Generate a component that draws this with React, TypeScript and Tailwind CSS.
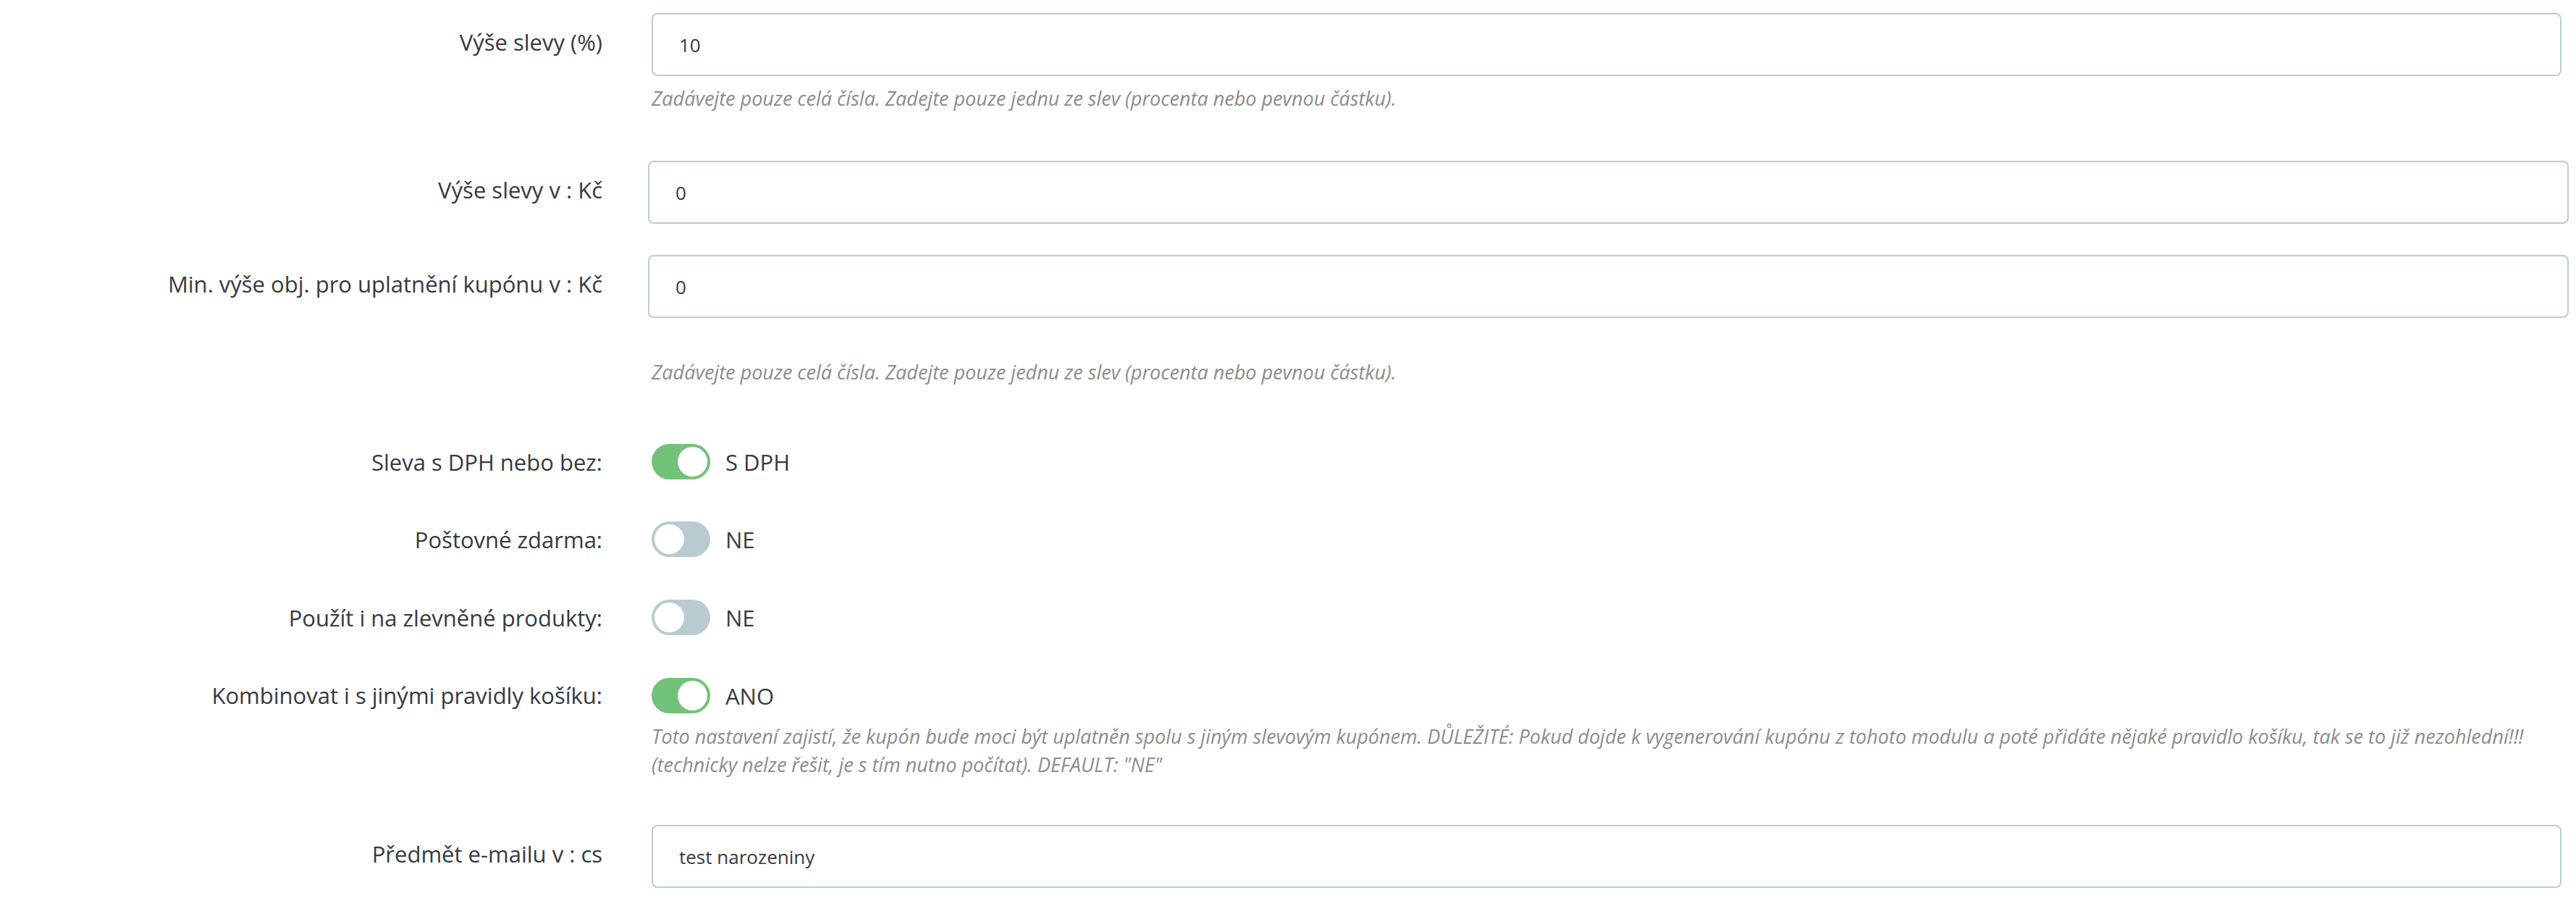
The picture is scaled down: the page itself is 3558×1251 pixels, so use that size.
import React from "react";

const font = { fontFamily: '"Open Sans", "Noto Sans", sans-serif' };

const Label = ({ children, toggle }: { children: React.ReactNode; toggle?: boolean }) => (
    <div className={"w-[832px] shrink-0 text-right text-[31px] leading-[46px] text-[#363a41] " + (toggle ? "" : "pt-[17px]")}>
        {children}
    </div>
);

const Help = ({ children, className = "" }: { children: React.ReactNode; className?: string }) => (
    <p className={"text-[27px] leading-[39px] italic text-[#8c8c8c] " + className}>{children}</p>
);

const TextInput = ({ value }: { value: string }) => (
    <input
        readOnly
        value={value}
        className="block w-full h-[87px] rounded-[8px] border-2 border-[#bbcdd2] bg-white pl-[36px] text-[26px] text-[#363a41] outline-none"
        style={font}
    />
);

const Toggle = ({ on, text }: { on: boolean; text: string }) => (
    <div className="flex items-center">
        <span
            className={
                "flex h-[49px] w-[81px] items-center rounded-full px-[4px] " +
                (on ? "bg-[#72c279] justify-end" : "bg-[#b9cbd0] justify-start")
            }
        >
            <span className="block h-[41px] w-[41px] rounded-full bg-white"></span>
        </span>
        <span className="ml-[21px] text-[31px] leading-[46px] text-[#363a41]">{text}</span>
    </div>
);

export default function App() {
    return (
        <div className="min-h-screen bg-white pt-[18px]" style={font}>
            {/* Výše slevy (%) */}
            <div className="flex">
                <Label>Výše slevy (%)</Label>
                <div className="ml-[68px] mr-[20px] flex-1">
                    <TextInput value="10" />
                    <Help className="mt-[11px]">
                        Zadávejte pouze celá čísla. Zadejte pouze jednu ze slev (procenta nebo pevnou částku).
                    </Help>
                </div>
            </div>

            <div className="mt-[67px] flex">
                <Label>Výše slevy v : Kč</Label>
                <div className="ml-[63px] mr-[10px] flex-1">
                    <TextInput value="0" />
                </div>
            </div>

            <div className="mt-[43px] flex">
                <Label>Min. výše obj. pro uplatnění kupónu v : Kč</Label>
                <div className="ml-[63px] mr-[10px] flex-1">
                    <TextInput value="0" />
                </div>
            </div>

            <div className="mt-[55px] flex">
                <div className="w-[832px] shrink-0"></div>
                <div className="ml-[68px] mr-[20px] flex-1">
                    <Help>
                        Zadávejte pouze celá čísla. Zadejte pouze jednu ze slev (procenta nebo pevnou částku).
                    </Help>
                </div>
            </div>

            <div className="mt-[80px] flex items-center">
                <Label toggle>Sleva s DPH nebo bez:</Label>
                <div className="ml-[68px] flex-1">
                    <Toggle on text="S DPH" />
                </div>
            </div>

            <div className="mt-[58px] flex items-center">
                <Label toggle>Poštovné zdarma:</Label>
                <div className="ml-[68px] flex-1">
                    <Toggle on={false} text="NE" />
                </div>
            </div>

            <div className="mt-[59px] flex items-center">
                <Label toggle>Použít i na zlevněné produkty:</Label>
                <div className="ml-[68px] flex-1">
                    <Toggle on={false} text="NE" />
                </div>
            </div>

            <div className="mt-[59px] flex">
                <div className="w-[832px] shrink-0 text-right text-[31px] leading-[49px] text-[#363a41]">
                    Kombinovat i s jinými pravidly košíku:
                </div>
                <div className="ml-[68px] mr-[20px] flex-1">
                    <Toggle on text="ANO" />
                    <Help className="mt-[12px]">
                        Toto nastavení zajistí, že kupón bude moci být uplatněn spolu s jiným slevovým kupónem. DŮLEŽITÉ: Pokud dojde k vygenerování kupónu z tohoto modulu a poté přidáte nějaké pravidlo košíku, tak se to již nezohlední!!! (technicky nelze řešit, je s tím nutno počítat). DEFAULT: "NE"
                    </Help>
                </div>
            </div>

            <div className="mt-[64px] flex pb-[24px]">
                <Label>Předmět e-mailu v : cs</Label>
                <div className="ml-[68px] mr-[20px] flex-1">
                    <TextInput value="test narozeniny" />
                </div>
            </div>
        </div>
    );
}
